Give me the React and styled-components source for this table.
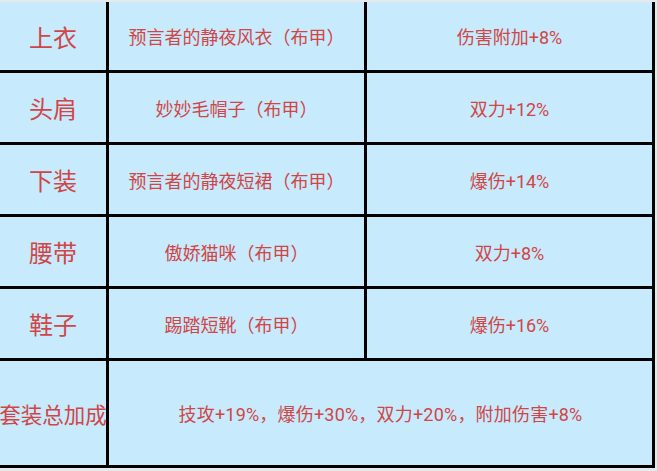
import styled, { createGlobalStyle } from 'styled-components'
import { Fragment } from 'react'

const GlobalStyle = createGlobalStyle`
  html, body {
    margin: 0;
    padding: 0;
    background: #e4e9ec;
  }
  body {
    font-family: Roboto, "Noto Sans CJK SC", sans-serif;
  }
`

const Table = styled.div`
  margin-top: 2px;
  width: 655px;
  display: grid;
  grid-template-columns: 109px 258px 288px;
  grid-template-rows: 71px 72px 72px 72px 72px 107px;
  background: #c7eafc;
  color: #d04646;
`

const Cell = styled.div`
  box-sizing: border-box;
  display: flex;
  align-items: center;
  justify-content: center;
  white-space: nowrap;
  border-right: 3px solid #000;
  border-bottom: 3px solid #000;
  font-size: ${p => (p.$head ? p.$size || 24 : 18)}px;
  letter-spacing: ${p => (p.$wide ? '0.2px' : '0')};
  grid-column: ${p => (p.$wide ? 'span 2' : 'auto')};
`

const rows = [
  ['上衣', '预言者的静夜风衣（布甲）', '伤害附加+8%'],
  ['头肩', '妙妙毛帽子（布甲）', '双力+12%'],
  ['下装', '预言者的静夜短裙（布甲）', '爆伤+14%'],
  ['腰带', '傲娇猫咪（布甲）', '双力+8%'],
  ['鞋子', '踢踏短靴（布甲）', '爆伤+16%'],
]

export default function App() {
  return (
    <>
      <GlobalStyle />
      <Table>
        {rows.map(([part, name, bonus]) => (
          <Fragment key={part}>
            <Cell $head>{part}</Cell>
            <Cell>{name}</Cell>
            <Cell>{bonus}</Cell>
          </Fragment>
        ))}
        <Cell $head $size={21.5}>套装总加成</Cell>
        <Cell $wide>技攻+19%，爆伤+30%，双力+20%，附加伤害+8%</Cell>
      </Table>
    </>
  )
}
